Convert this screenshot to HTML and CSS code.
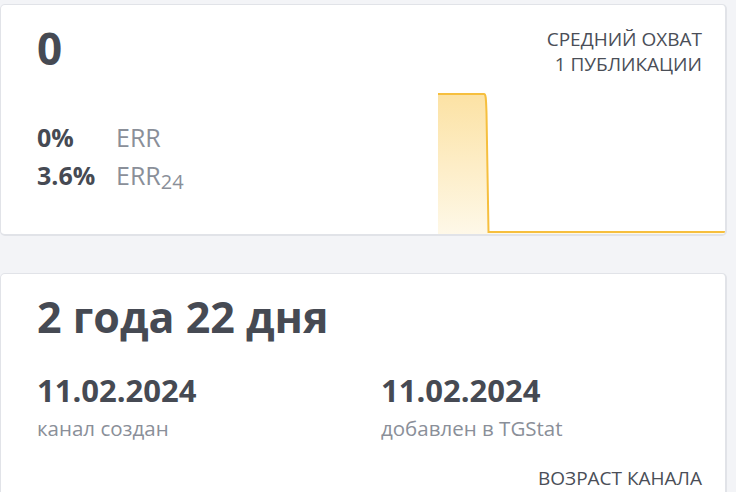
FILE: index.html
```html
<!DOCTYPE html>
<html lang="ru">
<head>
<meta charset="utf-8">
<link rel="stylesheet" href="styles.css">
</head>
<body>
<div class="page">
  <section class="card card-reach">
    <div class="reach-main">
      <div class="big-num">0</div>
      <div class="err-list">
        <div class="err-row"><span class="err-val">0%</span><span class="err-label">ERR</span></div>
        <div class="err-row"><span class="err-val">3.6%</span><span class="err-label">ERR<sub>24</sub></span></div>
      </div>
    </div>
    <div class="reach-side">
      <div class="card-title">Средний охват<br>1 публикации</div>
      <svg class="chart" width="287" height="141" viewBox="0 0 287 141">
        <defs>
          <linearGradient id="g" x1="0" y1="0" x2="0" y2="1">
            <stop offset="0" stop-color="#fce2a4"/>
            <stop offset="1" stop-color="#fef8e8"/>
          </linearGradient>
        </defs>
        <path d="M0 1 L46 1 C48 1 48 6 48.5 20 L50.5 139 L287 139 L287 141 L0 141 Z" fill="url(#g)"/>
        <path d="M0 1 L46 1 C48 1 48 6 48.5 20 L50.5 139 L287 139" fill="none" stroke="#f6bf3e" stroke-width="2"/>
      </svg>
    </div>
  </section>
  <section class="card card-age">
    <div class="age-value">2 года 22 дня</div>
    <div class="dates">
      <div class="date-item">
        <div class="date-val">11.02.2024</div>
        <div class="date-label">канал создан</div>
      </div>
      <div class="date-item">
        <div class="date-val">11.02.2024</div>
        <div class="date-label">добавлен в TGStat</div>
      </div>
    </div>
    <div class="card-title age-title">Возраст канала</div>
  </section>
</div>
</body>
</html>
```
FILE: styles.css
```css
* { box-sizing: border-box; }
html, body { margin: 0; padding: 0; }
body {
  background: #f3f4f7;
  font-family: "Open Sans", "Noto Sans", sans-serif;
  color: #464a53;
  width: 736px;
  height: 492px;
  overflow: hidden;
}
.page {
  padding-top: 4px;
  display: flex;
  flex-direction: column;
  gap: 37px;
  width: 727px;
}
.card {
  background: #fff;
  border: 1px solid #e1e3e8;
  border-right-width: 2px;
  border-bottom-width: 2px;
  border-radius: 5px;
}
.card-reach {
  height: 232px;
  display: flex;
  overflow: hidden;
}
.reach-main {
  flex: 1;
  padding: 15px 0 0 36px;
}
.big-num {
  font-size: 44px;
  font-weight: 700;
  line-height: 56px;
}
.err-list {
  margin-top: 46px;
  display: flex;
  flex-direction: column;
  gap: 8px;
}
.err-row {
  display: flex;
  font-size: 25px;
  line-height: 30px;
}
.err-val {
  width: 79px;
  font-weight: 700;
}
.err-label {
  color: #8a8f99;
}
.err-label sub {
  font-size: 20px;
  vertical-align: -4px;
  line-height: 0;
}
.reach-side {
  width: 287px;
  display: flex;
  flex-direction: column;
}
.card-title {
  text-transform: uppercase;
  font-size: 19px;
  line-height: 25px;
  text-align: right;
  color: #4a4e57;
}
.reach-side .card-title {
  padding: 22px 23px 0 0;
}
.chart {
  display: block;
  margin-top: auto;
}
.card-age {
  height: 240px;
  padding: 17px 23px 0 36px;
}
.age-value {
  font-size: 43px;
  font-weight: 700;
  line-height: 52px;
}
.dates {
  margin-top: 28px;
  display: grid;
  grid-template-columns: 344px 1fr;
}
.date-val {
  font-size: 31px;
  font-weight: 700;
  line-height: 38px;
}
.date-label {
  font-size: 20.5px;
  line-height: 26px;
  color: #8a8f99;
  margin-top: 6px;
}
.age-title {
  margin-top: 26px;
  line-height: 22px;
}
```
